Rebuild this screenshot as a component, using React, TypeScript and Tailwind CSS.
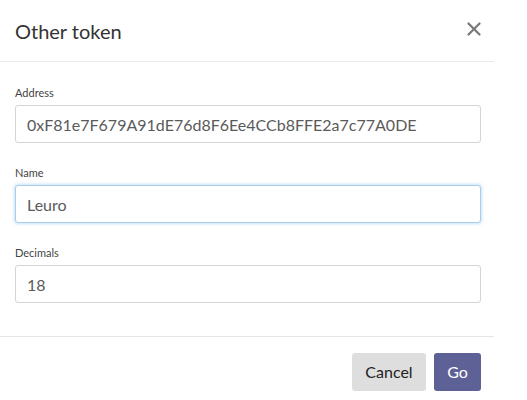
import { X } from "lucide-react";

export default function App() {
  return (
    <div className="min-h-[400px] bg-white font-['Lato',sans-serif] text-[#333]">
      <div className="w-[494px]">
        {/* Header */}
        <div className="flex h-[62px] items-center justify-between border-b border-[#e9e9e9] pl-[15px] pr-[9px]">
          <h1 className="text-[20px] leading-none text-[#333]">Other token</h1>
          <X className="-mt-[3px] h-[22px] w-[22px] text-[#7a7a7a]" strokeWidth={2.5} />
        </div>

        {/* Body */}
        <div className="border-b border-[#e5e5e5] px-[15px] pb-[33px] pt-[24px]">
          <Field label="Address" value="0xF81e7F679A91dE76d8F6Ee4CCb8FFE2a7c77A0DE" />
          <Field label="Name" value="Leuro" focused />
          <Field label="Decimals" value="18" last />
        </div>

        {/* Footer */}
        <div className="flex justify-end gap-[8px] pr-[13px] pt-[16px]">
          <button className="h-[38px] w-[74px] rounded-[3px] bg-[#dedede] text-[16px] text-[#222]">
            Cancel
          </button>
          <button className="h-[38px] w-[47px] rounded-[3px] bg-[#5e6196] text-[16px] text-white">
            Go
          </button>
        </div>
      </div>
    </div>
  );
}

function Field({
  label,
  value,
  focused,
  last,
}: {
  label: string;
  value: string;
  focused?: boolean;
  last?: boolean;
}) {
  return (
    <div className={last ? "" : "mb-[23px]"}>
      <label className="mb-[5px] block text-[11px] leading-[14px] text-[#444]">{label}</label>
      <input
        readOnly
        value={value}
        className={
          "block h-[38px] w-[466px] rounded-[3px] border bg-white px-[11px] text-[16px] text-[#5a5a5a] outline-none " +
          (focused
            ? "border-[#a9cdea] shadow-[0_0_3px_1px_rgba(102,170,230,0.35)]"
            : "border-[#d4d4d4]")
        }
      />
    </div>
  );
}
